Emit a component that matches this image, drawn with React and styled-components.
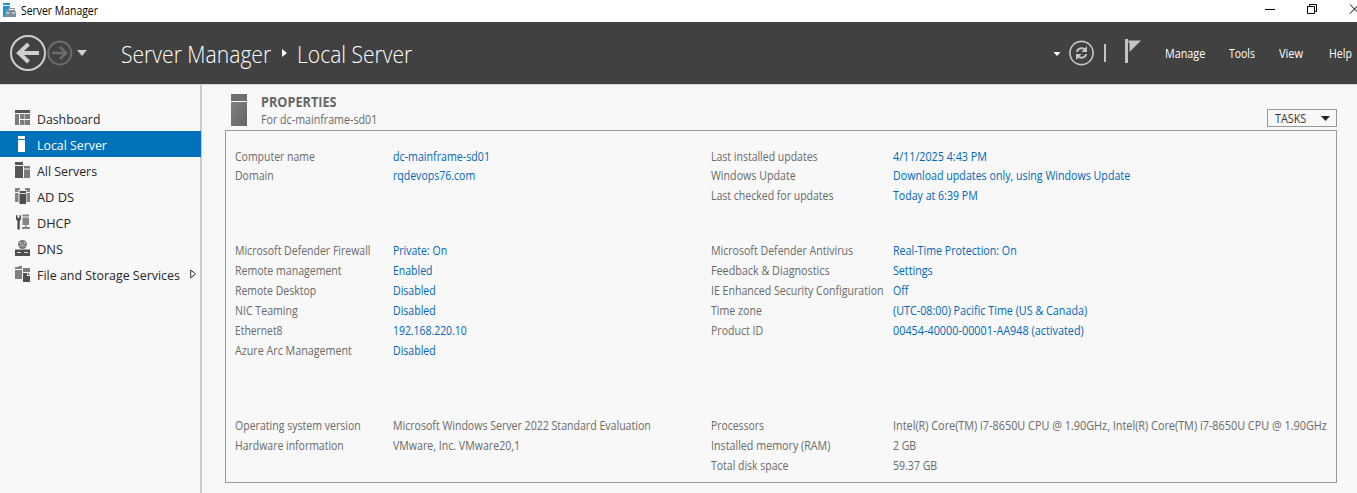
import React from 'react';
import styled, { createGlobalStyle } from 'styled-components';

const GlobalStyle = createGlobalStyle`
  * { box-sizing: border-box; }
  body {
    margin: 0;
    background: #f8f8f8;
    font-family: "Open Sans", "Noto Sans", sans-serif;
    font-size: 12px;
    color: #6a6a6a;
    overflow: hidden;
  }
  svg { display: block; flex: none; }
`;

const Text = styled.span`
  display: inline-block;
  white-space: nowrap;
  transform: scaleX(${(p) => p.$narrow || 0.88});
  transform-origin: 0 50%;
`;

const Window = styled.div`
  display: flex;
  flex-direction: column;
  width: 1357px;
  height: 493px;
  overflow: hidden;
`;

const TitleBar = styled.div`
  display: flex;
  align-items: center;
  flex: none;
  height: 22px;
  padding-left: 2px;
  background: #fff;
  color: #000;
`;

const TitleText = styled.span`
  flex: 1;
  margin-left: 3px;
  line-height: 22px;
`;

const WindowButtons = styled.div`
  display: flex;
  flex: none;
  width: 93px;
  height: 22px;
`;

const Header = styled.header`
  display: flex;
  align-items: center;
  flex: none;
  height: 62px;
  background: #414141;
  color: #fff;
`;

const Crumbs = styled.h1`
  display: flex;
  align-items: center;
  flex: 1;
  margin: 0 0 0 33px;
  padding-top: 1px;
  font-size: 23px;
  font-weight: 300;
  line-height: 30px;
`;

const Crumb = styled.span`
  flex: none;
  width: ${(p) => p.$w}px;
`;

const Tools = styled.div`
  display: flex;
  align-items: center;
  flex: none;
  width: 304px;
`;

const MenuItem = styled.span`
  flex: none;
  width: ${(p) => p.$w}px;
  line-height: 20px;
  padding-top: 1px;
`;

const Body = styled.div`
  display: flex;
  flex: 1;
  min-height: 0;
  border-top: 1px solid #d4d4d4;
`;

const Sidebar = styled.nav`
  flex: none;
  width: 202px;
  padding-top: 20px;
  border-right: 2px solid #cbcbcb;
`;

const NavItem = styled.div`
  display: flex;
  align-items: center;
  width: ${(p) => (p.$active ? 201 : 200)}px;
  height: 26px;
  padding-left: 15px;
  background: ${(p) => (p.$active ? '#0072bc' : 'transparent')};
  color: ${(p) => (p.$active ? '#fff' : '#262626')};
  font-size: 13.5px;
`;

const NavLabel = styled.span`
  flex: none;
  width: 153px;
  margin-left: 7px;
  padding-top: 1px;
`;

const Main = styled.main`
  flex: 1;
  padding: 8px 20px 0 23px;
`;

const SectionHead = styled.div`
  display: flex;
  height: 37px;
  padding-left: 6px;
`;

const SectionTitles = styled.div`
  flex: 1;
  margin-left: 14px;
`;

const SectionTitle = styled.h2`
  margin: 0;
  font-size: 13.5px;
  line-height: 18px;
  font-weight: 700;
  color: #666;
`;

const SectionSub = styled.div`
  line-height: 18px;
`;

const TasksButton = styled.div`
  display: flex;
  align-items: center;
  width: 70px;
  height: 18px;
  margin-top: 16px;
  padding-left: 7px;
  border: 1px solid #999;
  color: #333;
`;

const TasksLabel = styled.span`
  width: 46px;
`;

const Panel = styled.section`
  display: flex;
  width: 1112px;
  height: 353px;
  padding: 16px 0 0 9px;
  border: 1px solid #999;
`;

const Column = styled.div`
  display: flex;
  flex-direction: column;
  flex: none;
  width: ${(p) => p.$w}px;
`;

const Group = styled.div`
  flex: none;
  height: ${(p) => p.$h}px;
`;

const Row = styled.div`
  display: flex;
  height: ${(p) => p.$h || 20}px;
  line-height: 20px;

  &:nth-child(3) {
    margin-top: ${(p) => (p.$h === 19 ? 1 : 0)}px;
  }
`;

const Label = styled.span`
  flex: none;
  width: ${(p) => p.$w}px;
`;

const Value = styled.span`
  color: ${(p) => (p.$link ? '#0068b8' : 'inherit')};
`;

/* Each row: label, label narrowing, value, value narrowing. */
const LEFT = [
  { h: 94, rowH: 19, link: true, rows: [
    ['Computer name', 0.874, 'dc-mainframe-sd01', 0.888],
    ['Domain', 0.875, 'rqdevops76.com', 0.878],
  ] },
  { h: 175, link: true, rows: [
    ['Microsoft Defender Firewall', 0.876, 'Private: On', 0.875],
    ['Remote management', 0.88, 'Enabled', 0.875],
    ['Remote Desktop', 0.873, 'Disabled', 0.88],
    ['NIC Teaming', 0.883, 'Disabled', 0.88],
    ['Ethernet8', 0.86, '192.168.220.10', 0.868],
    ['Azure Arc Management', 0.893, 'Disabled', 0.88],
  ] },
  { h: 60, rows: [
    ['Operating system version', 0.88, 'Microsoft Windows Server 2022 Standard Evaluation', 0.882],
    ['Hardware information', 0.872, 'VMware, Inc. VMware20,1', 0.884],
  ] },
];

const RIGHT = [
  { h: 94, rowH: 19, link: true, rows: [
    ['Last installed updates', 0.875, '4/11/2025 4:43 PM', 0.896],
    ['Windows Update', 0.89, 'Download updates only, using Windows Update', 0.889],
    ['Last checked for updates', 0.876, 'Today at 6:39 PM', 0.883],
  ] },
  { h: 175, link: true, rows: [
    ['Microsoft Defender Antivirus', 0.882, 'Real-Time Protection: On', 0.888],
    ['Feedback & Diagnostics', 0.898, 'Settings', 0.89],
    ['IE Enhanced Security Configuration', 0.881, 'Off', 0.88],
    ['Time zone', 0.885, '(UTC-08:00) Pacific Time (US & Canada)', 0.897],
    ['Product ID', 0.88, '00454-40000-00001-AA948 (activated)', 0.903],
  ] },
  { h: 60, rows: [
    ['Processors', 0.865, 'Intel(R) Core(TM) i7-8650U CPU @ 1.90GHz, Intel(R) Core(TM) i7-8650U CPU @ 1.90GHz', 0.904],
    ['Installed memory (RAM)', 0.893, '2 GB', 0.87],
    ['Total disk space', 0.873, '59.37 GB', 0.88],
  ] },
];

const NAV = [
  ['Dashboard', 0.91],
  ['Local Server', 0.915],
  ['All Servers', 0.915],
  ['AD DS', 0.95],
  ['DHCP', 0.94],
  ['DNS', 0.95],
  ['File and Storage Services', 0.92],
];

const NAV_ICONS = {
  Dashboard: (
    <>
      <rect y="0" width="15" height="3" fill="#555" />
      <g fill="#7b7b7b">
        <rect y="4" width="4" height="11" />
        <rect x="5" y="4" width="4.500" height="5" />
        <rect x="10" y="4" width="5" height="5" />
        <rect x="5" y="10" width="4.500" height="5" />
        <rect x="10" y="10" width="5" height="5" />
      </g>
    </>
  ),
  'Local Server': (
    <g fill="#fff">
      <rect x="3" y="0" width="7" height="3" />
      <rect x="3" y="4" width="7" height="12" />
    </g>
  ),
  'All Servers': (
    <>
      <g fill="#555"><rect width="8" height="3" /><rect y="4" width="8" height="12" /></g>
      <g fill="#7b7b7b"><rect x="9" y="4" width="6" height="2.500" /><rect x="9" y="7.500" width="6" height="8.500" /></g>
    </>
  ),
  'AD DS': (
    <>
      <path d="M0 0h5v2H3.500v2H0zM10 0h5v4h-3.500V2H10zM0 5h3.500v9H0zM11.500 5H15v9h-3.500z" fill="#858585" />
      <g fill="#4e4e4e"><rect x="4.500" y="3" width="6.500" height="2.200" /><rect x="4.500" y="6" width="6.500" height="10" /></g>
    </>
  ),
  DHCP: (
    <>
      <path d="M1 1.500l1.500-.8v3h2v-3L6 1.500v4L4.800 7v8.500H2.400V7L1 5.500z" fill="#505050" />
      <g fill="#858585">
        <rect x="7.500" y="0.500" width="6.500" height="2" />
        <rect x="7.500" y="3.500" width="6.500" height="7.500" />
        <rect x="9.800" y="11.500" width="2" height="3" />
        <rect x="7" y="13" width="8" height="2" />
      </g>
    </>
  ),
  DNS: (
    <>
      <circle cx="7.500" cy="4.500" r="4.500" fill="#777" />
      <g fill="#c8c8c8">
        <circle cx="5.500" cy="3" r="1" />
        <circle cx="9.500" cy="3" r="1" />
        <circle cx="7.500" cy="5.500" r="1" />
        <circle cx="4.500" cy="6" r=".8" />
        <circle cx="10.500" cy="6" r=".8" />
      </g>
      <path d="M0 9.500h15V16H0z" fill="#4e4e4e" />
      <path d="M2 12.500h4M9 12.500h4" stroke="#ddd" />
    </>
  ),
  'File and Storage Services': (
    <>
      <path d="M0 1h3l1-1h3v3H0zM0 4h7v9H0zM8 2h7v4H8z" fill="#7f7f7f" />
      <path d="M8 7h4v3h3v6H8z" fill="#505050" />
      <path d="M12.800 6.500l2.200 2.500h-2.200z" fill="#505050" />
    </>
  ),
};

function PropertyColumn({ groups, width, labelWidth }) {
  return (
    <Column $w={width}>
      {groups.map((g, i) => (
        <Group key={i} $h={g.h}>
          {g.rows.map(([label, labelNarrow, value, valueNarrow]) => (
            <Row key={label} $h={g.rowH}>
              <Label $w={labelWidth}><Text $narrow={labelNarrow}>{label}</Text></Label>
              <Value $link={g.link}><Text $narrow={valueNarrow}>{value}</Text></Value>
            </Row>
          ))}
        </Group>
      ))}
    </Column>
  );
}

function AppIcon() {
  return (
    <svg width="16" height="16" viewBox="0 0 16 16">
      <path d="M1 0h7v2H1zM1 3h7v1.500L4 8v6H1z" fill="#1c94d6" />
      <path d="M6.500 7V5.500h6V7" fill="none" stroke="#7c919e" />
      <path d="M3 9l2-2h7.500L14 9v5H3z" fill="#7c919e" />
      <path d="M4 10h3.500M10 10h3.500" stroke="#e8eef2" />
    </svg>
  );
}

function NavButtons() {
  return (
    <svg width="88" height="62" viewBox="0 0 88 62">
      <circle cx="28" cy="31" r="17" fill="none" stroke="#cfcfcf" strokeWidth="2" />
      <path d="M39 31H20M28.500 22L19 31l9.500 9" fill="none" stroke="#cfcfcf" strokeWidth="4" />
      <circle cx="59.800" cy="31" r="11.500" fill="none" stroke="#6c6c6c" strokeWidth="2" />
      <path d="M52 31h13M60 25l6 6-6 6" fill="none" stroke="#6c6c6c" strokeWidth="2.600" />
      <path d="M77 28h10l-5 6z" fill="#cfcfcf" />
    </svg>
  );
}

function HeaderIcons() {
  return (
    <svg width="112" height="62" viewBox="1053 22 112 62">
      <path d="M1053.500 52h7l-3.500 4z" fill="#fff" />
      <circle cx="1081.500" cy="53" r="11.600" fill="none" stroke="#c4c4c4" strokeWidth="1.600" />
      <path d="M1077 52c.5-4 6-5 8.500-2M1086 54c-.5 4-6 5-8.500 2" fill="none" stroke="#c4c4c4" strokeWidth="2" />
      <path d="M1087 46v6h-5.500zM1076 60v-6h5.500z" fill="#c4c4c4" />
      <path d="M1105 44v18" stroke="#c4c4c4" strokeWidth="2" />
      <rect x="1125" y="39" width="3" height="24" fill="#c4c4c4" />
      <path d="M1128.500 40.500h12.500l-11.500 11.500v-9h-1z" fill="#c4c4c4" />
    </svg>
  );
}

export default function App() {
  return (
    <Window>
      <GlobalStyle />
      <TitleBar>
        <AppIcon />
        <TitleText><Text $narrow={0.868}>Server Manager</Text></TitleText>
        <WindowButtons>
          <svg width="93" height="22" viewBox="1264 0 93 22" fill="none" stroke="#000">
            <path d="M1265 9.500h10" />
            <path d="M1307.500 6.500h7v7h-7zM1309.500 6.500v-2h7v7h-2" />
            <path d="M1350 4.500l9 9M1359 4.500l-9 9" />
          </svg>
        </WindowButtons>
      </TitleBar>
      <Header>
        <NavButtons />
        <Crumbs>
          <Crumb $w={161}><Text $narrow={0.918}>Server Manager</Text></Crumb>
          <svg width="15" height="10" viewBox="0 0 15 10"><path d="M0 0l5 4-5 4z" fill="#fff" /></svg>
          <Crumb><Text $narrow={0.915}>Local Server</Text></Crumb>
        </Crumbs>
        <Tools>
          <HeaderIcons />
          <MenuItem $w={64}><Text $narrow={0.9}>Manage</Text></MenuItem>
          <MenuItem $w={50}><Text $narrow={0.87}>Tools</Text></MenuItem>
          <MenuItem $w={50}><Text $narrow={0.92}>View</Text></MenuItem>
          <MenuItem $w={28}><Text $narrow={0.88}>Help</Text></MenuItem>
        </Tools>
      </Header>
      <Body>
        <Sidebar>
          {NAV.map(([name, narrow]) => (
            <NavItem key={name} $active={name === 'Local Server'}>
              <svg width="15" height="16" viewBox="0 0 15 16">{NAV_ICONS[name]}</svg>
              <NavLabel><Text $narrow={narrow}>{name}</Text></NavLabel>
              {name === 'File and Storage Services' && (
                <svg width="7" height="10" viewBox="0 0 7 10"><path d="M.7 1v8L5.500 5z" fill="none" stroke="#333" /></svg>
              )}
            </NavItem>
          ))}
        </Sidebar>
        <Main>
          <SectionHead>
            <svg width="16" height="34" viewBox="0 0 16 34">
              <defs>
                <linearGradient id="server" x1="0" y1="0" x2="1" y2="1">
                  <stop offset="0" stopColor="#828282" />
                  <stop offset="1" stopColor="#626262" />
                </linearGradient>
              </defs>
              <rect y="1" width="16" height="7" fill="#6e6e6e" />
              <rect y="9" width="16" height="24" fill="url(#server)" />
            </svg>
            <SectionTitles>
              <SectionTitle><Text $narrow={0.94}>PROPERTIES</Text></SectionTitle>
              <SectionSub><Text $narrow={0.89}>For dc-mainframe-sd01</Text></SectionSub>
            </SectionTitles>
            <TasksButton>
              <TasksLabel><Text $narrow={0.9}>TASKS</Text></TasksLabel>
              <svg width="9" height="5" viewBox="0 0 9 5"><path d="M0 0h9L4.500 5z" fill="#222" /></svg>
            </TasksButton>
          </SectionHead>
          <Panel>
            <PropertyColumn groups={LEFT} width={476} labelWidth={158} />
            <PropertyColumn groups={RIGHT} width={620} labelWidth={182} />
          </Panel>
        </Main>
      </Body>
    </Window>
  );
}
